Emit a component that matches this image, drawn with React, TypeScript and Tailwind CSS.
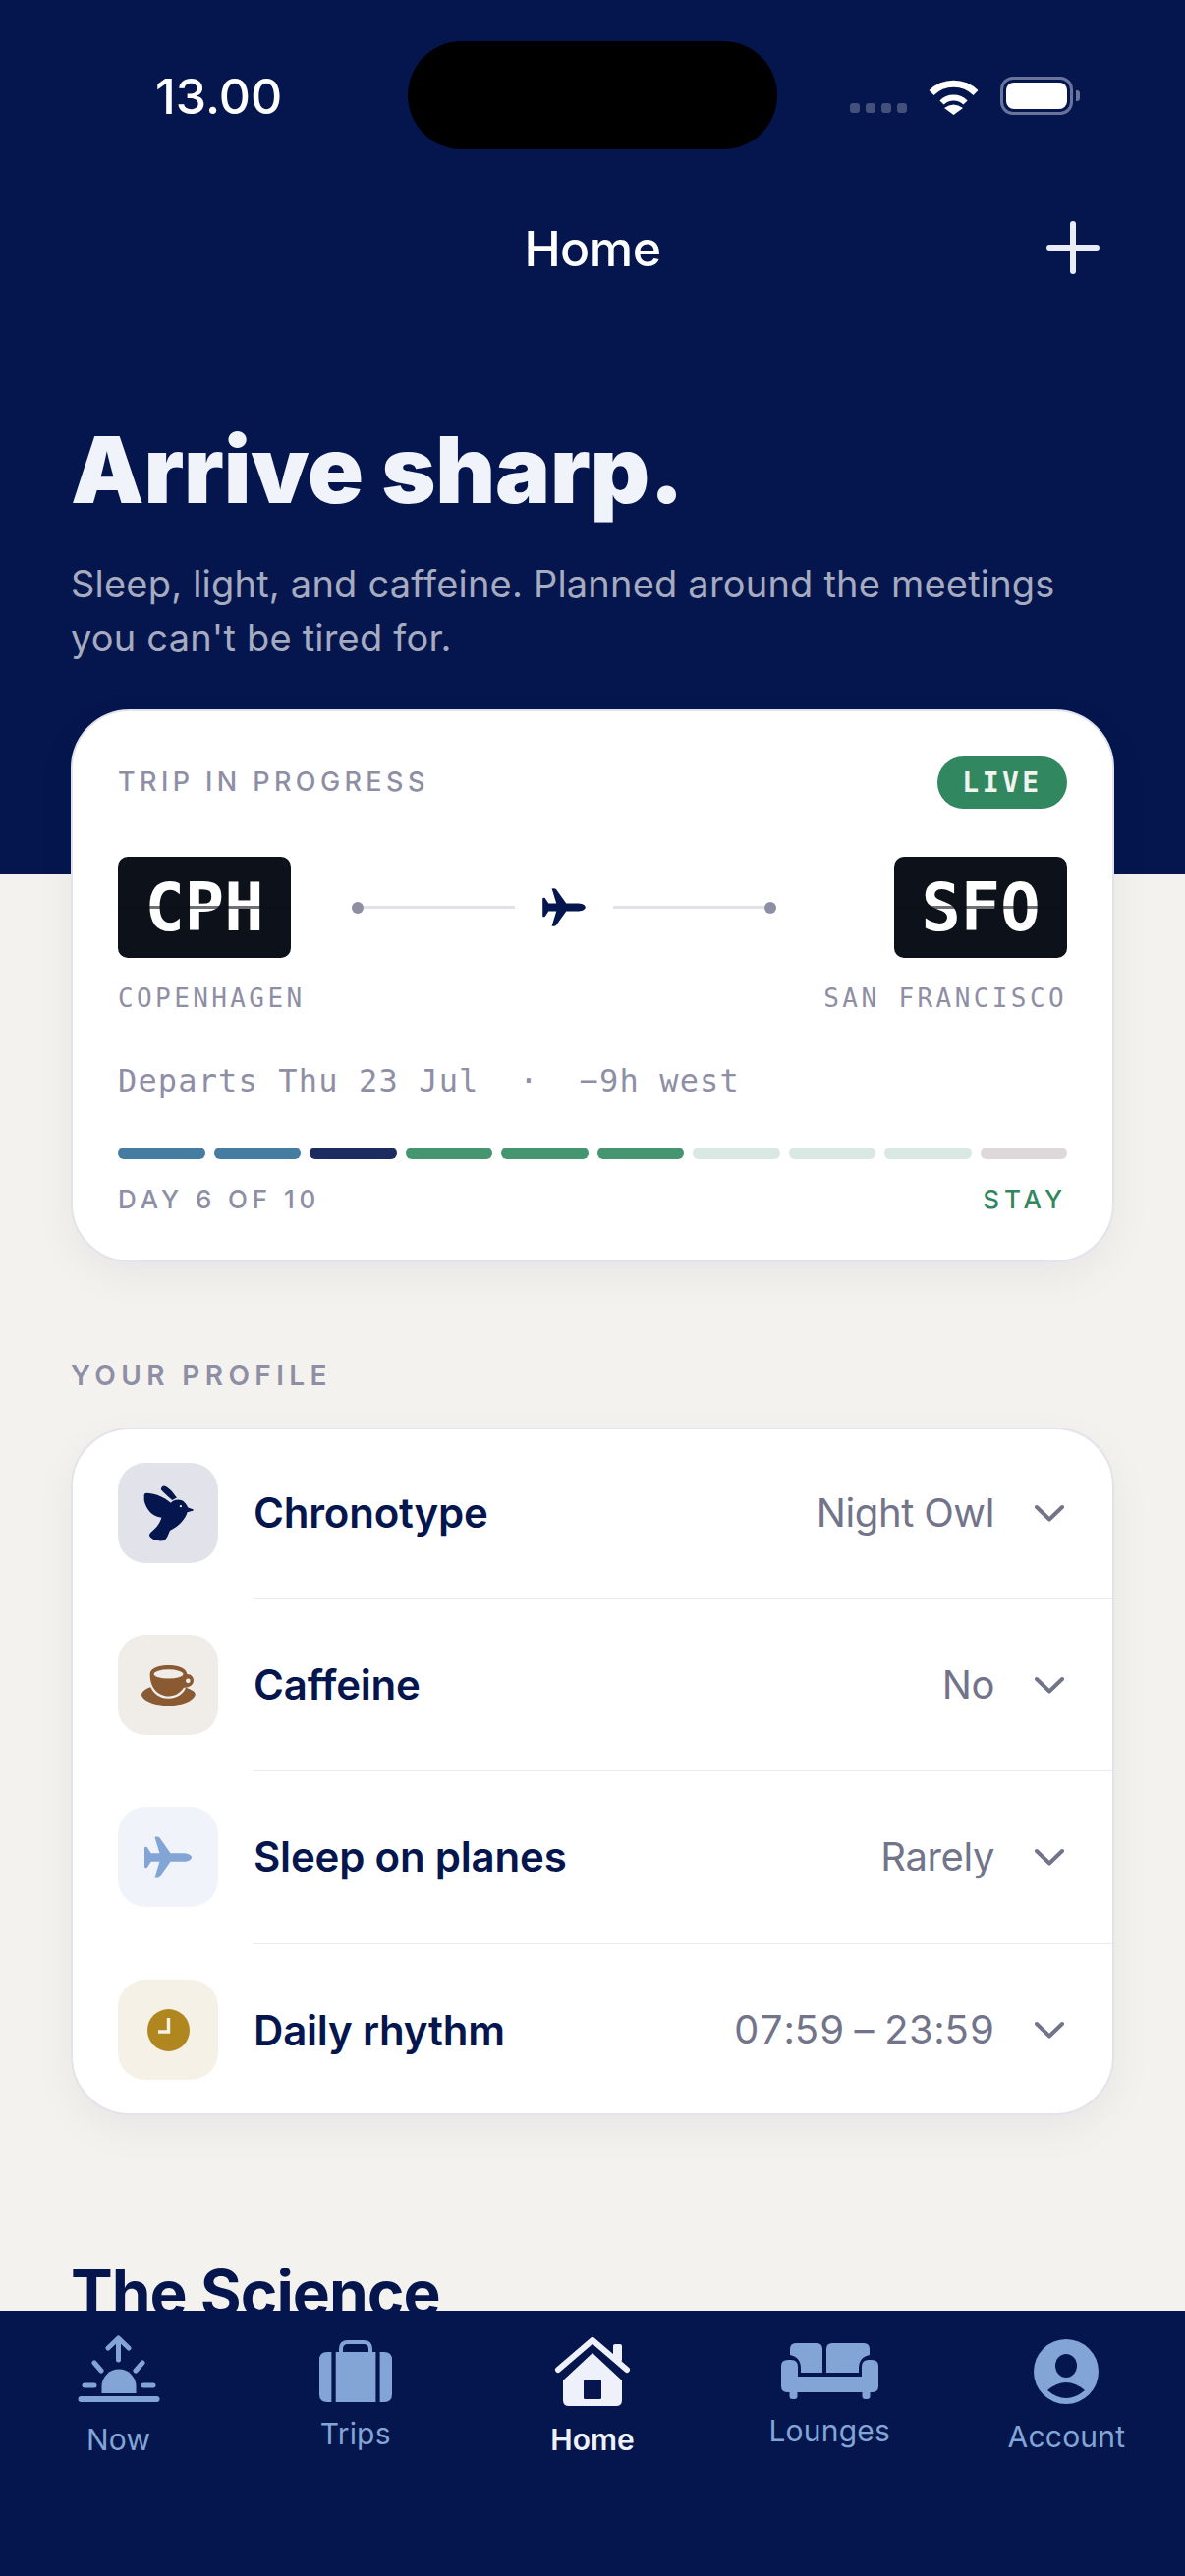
import type { ReactNode } from 'react'

const mono = "font-['DejaVu_Sans_Mono',monospace]"

const PLANE =
  'M290 212C290 205 280 200 268 199L226 199L192 151Q188 148 178 150L193 199L167 199L155 181Q150 179 147 182L147 242Q150 245 155 243L167 225L193 225L178 274Q188 276 192 273L226 225L268 225C280 224 290 219 290 212Z'

function Plane({ className }: { className: string }) {
  return (
    <svg viewBox="147 148 143 128" className={className} fill="currentColor">
      <path d={PLANE} />
    </svg>
  )
}

function StatusBar() {
  return (
    <div className="flex h-[152px] shrink-0 pt-[42px] pl-[158px]">
      <span className="mt-[31px] w-[257px] text-[50px] leading-[50px] font-medium text-white">
        13.00
      </span>
      <div className="h-[110px] w-[376px] rounded-[55px] bg-black" />
      <div className="ml-[74px] mt-[36px] flex items-end self-start">
        <div className="mb-[2px] flex gap-[6px]">
          {[0, 1, 2, 3].map((i) => (
            <span key={i} className="h-[10px] w-[10px] rounded-[3px] bg-[#44507c]" />
          ))}
        </div>
        <svg viewBox="0 0 51 37" className="ml-[22px] h-[37px] w-[51px]" fill="none" stroke="white">
          <path d="M3 14.5A32 32 0 0 1 48 14.5" strokeWidth="7" />
          <path d="M13.5 24.5A17 17 0 0 1 37.5 24.5" strokeWidth="6" />
          <path d="M25.5 37L16 30Q25.5 23 35 30Z" fill="white" stroke="none" />
        </svg>
        <div className="ml-[22px] flex h-[39px] w-[74px] rounded-[13px] border-[3px] border-[#69739b] p-[3px]">
          <div className="flex-1 rounded-[8px] bg-white" />
        </div>
        <div className="mb-[14px] ml-[3px] h-[11px] w-[4px] rounded-r-[3px] bg-[#69739b]" />
      </div>
    </div>
  )
}

function Hero() {
  return (
    <div className="h-[890px] shrink-0 bg-[#04164d]">
      <StatusBar />
      <div className="relative mt-[71px] flex justify-center">
        <span className="text-[50px] leading-[60px] font-medium tracking-[-0.5px] text-white">Home</span>
        <svg viewBox="0 0 54 54" className="absolute top-[2px] left-[1065px] h-[54px] w-[54px]" fill="none" stroke="#e9ebf5" strokeWidth="6" strokeLinecap="round">
          <path d="M27 3V51M3 27H51" />
        </svg>
      </div>
      <h1 className="mt-[140px] pl-[72px] text-[94px] leading-[110px] font-black tracking-[-0.2px] text-[#f0f3fa]">
        Arrive sharp.
      </h1>
      <p className="mt-[34px] px-[72px] text-[38px] leading-[55px] tracking-[0.2px] text-[#a6abc0]">
        Sleep, light, and caffeine. Planned around the meetings
        <br />
        you can't be tired for.
      </p>
    </div>
  )
}

function Code({ code }: { code: string }) {
  return (
    <div className="relative flex h-[103px] w-[176px] items-center justify-center rounded-[10px] bg-[#0d1119]">
      <span className={`${mono} text-[67px] leading-[64px] font-bold text-white`}>{code}</span>
      <div className="absolute inset-x-0 top-[50px] h-[3px] bg-[#0d1119]/60" />
    </div>
  )
}

const SEGMENTS = [
  'bg-[#457da2]',
  'bg-[#457da2]',
  'bg-[#1c2c60]',
  'bg-[#459570]',
  'bg-[#459570]',
  'bg-[#459570]',
  'bg-[#d9e8e2]',
  'bg-[#d9e8e2]',
  'bg-[#d9e8e2]',
  'bg-[#ded8da]',
]

function TripCard() {
  return (
    <section className="relative mx-[72px] -mt-[168px] h-[563px] rounded-[60px] border-2 border-[#e3e3ec] bg-white px-[46px] pt-[46px] shadow-[0_14px_44px_rgba(4,22,77,0.05)]">
      <div className="flex items-center justify-between">
        <span className="text-[27px] font-medium tracking-[4.4px] text-[#8e8ea5]">TRIP IN PROGRESS</span>
        <span className={`${mono} flex h-[53px] w-[132px] items-center justify-center rounded-full bg-[#318760] text-[28px] font-bold tracking-[3.5px] text-[#f1f3ef]`}>
          LIVE
        </span>
      </div>
      <div className="mt-[49px] flex items-center justify-between">
        <Code code="CPH" />
        <div className="mr-[58px] flex items-center">
          <span className="h-[12px] w-[12px] rounded-full bg-[#8e8ea5]" />
          <span className="h-[3px] w-[154px] bg-[#e2e1ea]" />
          <Plane className="mx-[28px] h-[39px] w-[44px] text-[#04164d]" />
          <span className="h-[3px] w-[154px] bg-[#e2e1ea]" />
          <span className="h-[12px] w-[12px] rounded-full bg-[#8e8ea5]" />
        </div>
        <Code code="SFO" />
      </div>
      <div className={`${mono} mt-[25px] flex justify-between text-[26px] leading-[32px] tracking-[3.4px] text-[#8e8ea5]`}>
        <span>COPENHAGEN</span>
        <span>SAN FRANCISCO</span>
      </div>
      <p className={`${mono} mt-[48px] text-[32px] leading-[40px] tracking-[1.15px] whitespace-pre text-[#8e8ea5]`}>
        Departs Thu 23 Jul  ·  −9h west
      </p>
      <div className="mt-[48px] grid grid-cols-10 gap-[9px]">
        {SEGMENTS.map((c, i) => (
          <span key={i} className={`h-[12px] rounded-[6px] ${c}`} />
        ))}
      </div>
      <div className="mt-[24px] flex justify-between text-[26px] leading-[34px] font-medium tracking-[4.9px]">
        <span className="text-[#8e8ea5]">DAY 6 OF 10</span>
        <span className="text-[#318760]">STAY</span>
      </div>
    </section>
  )
}

function Bird() {
  return (
    <svg viewBox="135 155 152 170" className="h-[57px] w-[51px]" fill="#04164d">
      <path d="M137 185Q137 178 147 178C175 180 200 192 218 208C226 198 240 196 250 200C260 204 266 214 270 222L285 227Q289 230 284 232L268 236C262 258 240 280 215 292C210 305 205 320 195 323C180 325 160 320 153 308Q152 302 158 297C170 287 183 275 190 253C160 250 142 225 137 200Z" />
      <path d="M188 168Q190 155 200 157C210 160 225 175 236 192L222 200C212 190 198 180 188 168Z" />
      <circle cx="248" cy="218" r="3.5" fill="#e2e3ea" />
    </svg>
  )
}

function Coffee() {
  return (
    <svg viewBox="130 160 170 130" className="h-[43px] w-[57px]" fill="#8a5a33">
      <path d="M160 230C135 238 130 250 133 258C145 280 190 288 215 287C250 288 290 275 297 255C300 245 285 238 268 232C262 250 240 266 215 265C190 266 168 250 160 230Z" />
      <path d="M158 190C158 170 190 163 215 163C240 163 270 170 272 190C285 190 293 200 292 212C290 226 275 232 262 232C250 250 235 258 215 258C190 258 158 240 158 190Z" />
      <ellipse cx="215" cy="190" rx="45" ry="14" fill="#f0ece8" />
      <circle cx="275" cy="211" r="7" fill="#f0ece8" />
    </svg>
  )
}

function Clock() {
  return (
    <svg viewBox="0 0 43 43" className="h-[43px] w-[43px]">
      <circle cx="21.5" cy="21.5" r="21.5" fill="#b0871f" />
      <path d="M21.5 9V23H11" fill="none" stroke="#f6f1e6" strokeWidth="3.4" />
    </svg>
  )
}

type Row = { label: string; value: string; tile: string; pad: string; sep: string; icon: ReactNode }

const ROWS: Row[] = [
  { label: 'Chronotype', value: 'Night Owl', tile: 'bg-[#e2e3ea]', pad: 'pt-[34px] pb-[37px]', sep: 'border-b border-[#e9e9ef]', icon: <Bird /> },
  { label: 'Caffeine', value: 'No', tile: 'bg-[#f0ece8]', pad: 'pt-[36px] pb-[37px]', sep: 'border-b border-[#e9e9ef]', icon: <Coffee /> },
  { label: 'Sleep on planes', value: 'Rarely', tile: 'bg-[#f0f4fa]', pad: 'pt-[36px] pb-[38px]', sep: 'border-b border-[#e9e9ef]', icon: <Plane className="h-[43px] w-[48px] text-[#82a5d6]" /> },
  { label: 'Daily rhythm', value: '07:59 – 23:59', tile: 'bg-[#f6f1e6]', pad: 'pt-[36px] pb-[34px]', sep: '', icon: <Clock /> },
]

function Profile() {
  return (
    <>
      <h2 className="mt-[98px] pl-[72px] text-[28px] leading-[34px] font-semibold tracking-[5.4px] text-[#8e8ea5]">
        YOUR PROFILE
      </h2>
      <section className="mx-[72px] mt-[36px] rounded-[60px] border-2 border-[#e3e3ec] bg-white shadow-[0_14px_44px_rgba(4,22,77,0.05)]">
        {ROWS.map((r) => (
          <div key={r.label} className="flex pl-[46px]">
            <div className={r.pad}>
              <div className={`flex h-[102px] w-[102px] items-center justify-center rounded-[28px] ${r.tile}`}>{r.icon}</div>
            </div>
            <div className={`ml-[36px] flex flex-1 items-center justify-between pr-[48px] ${r.pad} ${r.sep}`}>
              <span className="text-[42px] font-semibold tracking-[-0.2px] text-[#04164d]">{r.label}</span>
              <span className="flex items-center gap-[40px] text-[40px] tracking-[-0.4px] text-[#72748a] tabular-nums">
                {r.value}
                <svg viewBox="0 0 32 18" className="h-[18px] w-[32px]" fill="none" stroke="#72748a" strokeWidth="4" strokeLinecap="round" strokeLinejoin="round">
                  <path d="M3 3L16 15.500L29 3" />
                </svg>
              </span>
            </div>
          </div>
        ))}
      </section>
      <h2 className="mt-[143px] pl-[72px] text-[64px] leading-[76px] font-bold tracking-[-1px] text-[#04164d]">
        The Science
      </h2>
    </>
  )
}

const tabColor = '#82a5d6'

function SunIcon() {
  return (
    <svg viewBox="0 0 84 68" className="h-[68px] w-[84px]" fill="none" stroke={tabColor} strokeWidth="5" strokeLinecap="round" strokeLinejoin="round">
      <rect x="0.5" y="62" width="83" height="6" rx="3" fill={tabColor} stroke="none" />
      <path d="M24.5 59V52A17.5 17.5 0 0 1 59.5 52V59Z" fill={tabColor} stroke="none" />
      <path d="M7 51H17M67 51H77M17 28L24 36M66 28L59 36M41.5 3V25M31 13L41.5 3L52 13" />
    </svg>
  )
}

function TripsIcon() {
  return (
    <svg viewBox="0 0 74 63" className="h-[63px] w-[74px]" fill={tabColor}>
      <path d="M22 13V9Q22 2 29 2H45Q52 2 52 9V13" fill="none" stroke={tabColor} strokeWidth="4" />
      <path d="M12.4 12V63H8Q0 63 0 55V20Q0 12 8 12Z" />
      <rect x="16.7" y="12" width="40.7" height="51" />
      <path d="M61.6 12H66Q74 12 74 20V55Q74 63 66 63H61.6Z" />
    </svg>
  )
}

function HomeIcon() {
  return (
    <svg viewBox="0 0 80 70" className="h-[70px] w-[80px]" fill="#eef1f9">
      <rect x="61" y="7" width="9" height="18" rx="2" />
      <path d="M40 16L70 44V64Q70 70 64 70H16Q10 70 10 64V44Z" />
      <path d="M5 33L40 3L75 33" fill="none" stroke="#eef1f9" strokeWidth="6" strokeLinecap="round" strokeLinejoin="round" />
      <rect x="31" y="43" width="18" height="20" rx="1.5" fill="#04164d" />
    </svg>
  )
}

function SofaIcon() {
  return (
    <svg viewBox="0 0 99 57" className="h-[57px] w-[99px]" fill={tabColor}>
      <path d="M9 12V6Q9 0 15 0H36Q42 0 42 6V30H20V26Q20 14 9 12Z" />
      <path d="M90 12V6Q90 0 84 0H52Q46 0 46 6V30H79V26Q79 14 90 12Z" />
      <path d="M0 23Q0 17 7 17H10Q17 17 17 24V34H82V24Q82 17 89 17H92Q99 17 99 23V44Q99 50 92 50H7Q0 50 0 44Z" />
      <rect x="8.5" y="48" width="8" height="9" rx="3" />
      <rect x="82.5" y="48" width="8" height="9" rx="3" />
    </svg>
  )
}

function AccountIcon() {
  return (
    <svg viewBox="0 0 66 66" className="h-[66px] w-[66px]">
      <circle cx="33" cy="33" r="33" fill={tabColor} />
      <ellipse cx="33" cy="27" rx="11" ry="12" fill="#04164d" />
      <path d="M14 52Q33 36 52 52Q33 68 14 52Z" fill="#04164d" />
    </svg>
  )
}

type Tab = { label: string; icon: ReactNode; top: string; gap: string; active?: boolean }

const TABS: Tab[] = [
  { label: 'Now', icon: <SunIcon />, top: 'pt-[25px]', gap: 'mt-[20px]' },
  { label: 'Trips', icon: <TripsIcon />, top: 'pt-[30px]', gap: 'mt-[14px]' },
  { label: 'Home', icon: <HomeIcon />, top: 'pt-[27px]', gap: 'mt-[16px]', active: true },
  { label: 'Lounges', icon: <SofaIcon />, top: 'pt-[33px]', gap: 'mt-[14px]' },
  { label: 'Account', icon: <AccountIcon />, top: 'pt-[29px]', gap: 'mt-[15px]' },
]

function TabBar() {
  return (
    <nav className="grid h-[270px] shrink-0 grid-cols-5 bg-[#04164d]">
      {TABS.map((t) => (
        <div key={t.label} className={`flex flex-col items-center ${t.top}`}>
          {t.icon}
          <span
            className={`${t.gap} text-[30px] leading-[36px] ${
              t.active ? 'font-semibold text-[#eef1f9]' : 'tracking-[0.2px] text-[#82a5d6]'
            }`}
          >
            {t.label}
          </span>
        </div>
      ))}
    </nav>
  )
}

export default function App() {
  return (
    <div className="flex h-[2622px] w-[1206px] flex-col overflow-hidden bg-[#f4f2ee] font-['Inter',sans-serif]">
      <main className="min-h-0 flex-1 overflow-hidden">
        <Hero />
        <TripCard />
        <Profile />
      </main>
      <TabBar />
    </div>
  )
}
